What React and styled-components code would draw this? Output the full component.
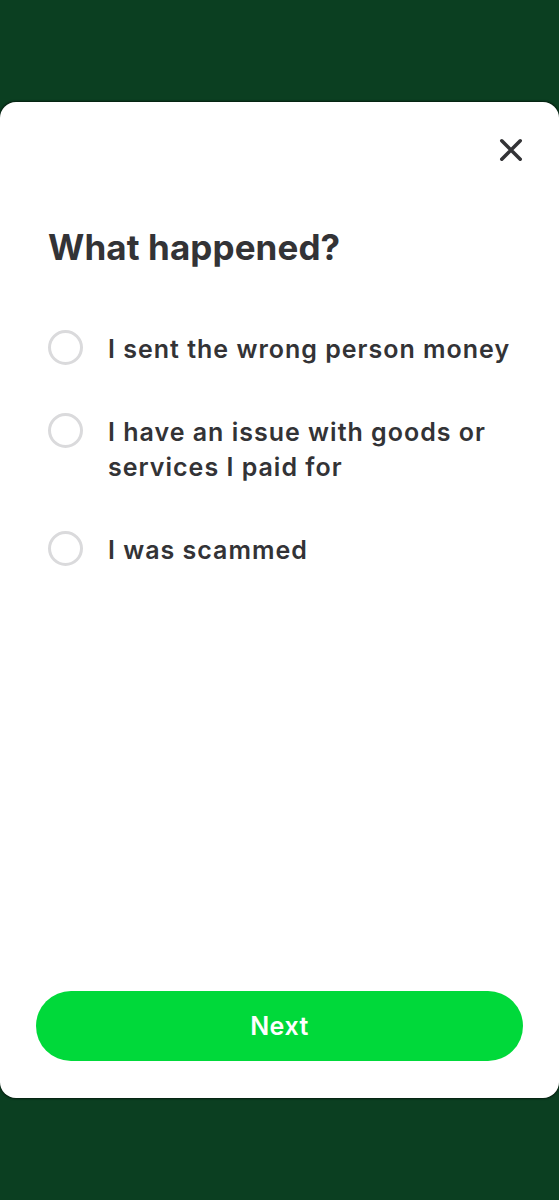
import React, { useState } from "react";
import styled, { createGlobalStyle } from "styled-components";

const GlobalStyle = createGlobalStyle`
  html, body { margin: 0; padding: 0; background: #0b3f21; }
  body { font-family: Inter, "Noto Sans", "Liberation Sans", sans-serif; }
  * { box-sizing: border-box; }
`;

const Page = styled.div`
  width: 559px;
  height: 1200px;
  background: #0b3f21;
  padding: 102px 0;
  display: flex;
  flex-direction: column;
`;

const Sheet = styled.div`
  flex: 1;
  background: #ffffff;
  border-radius: 16px;
  box-shadow: 0 0 2px 1px rgba(0, 0, 0, 0.55);
  padding: 36px 36px 37px 36px;
  display: flex;
  flex-direction: column;
`;

const TopBar = styled.div`
  display: flex;
  justify-content: flex-end;
  height: 24px;
`;

const CloseButton = styled.button`
  width: 24px;
  height: 24px;
  padding: 0;
  border: none;
  background: transparent;
  cursor: pointer;
  display: flex;
  align-items: center;
  justify-content: center;
`;

const Content = styled.div`
  flex: 1;
  padding: 0 0 0 12px;
  display: flex;
  flex-direction: column;
`;

const Title = styled.h1`
  margin: 65px 0 0 0;
  font-size: 35px;
  line-height: 40px;
  font-weight: 700;
  color: #333336;
  letter-spacing: 0.1px;
`;

const Options = styled.div`
  margin-top: 65px;
  display: flex;
  flex-direction: column;
  gap: 48px;
`;

const Option = styled.label`
  display: flex;
  align-items: flex-start;
  gap: 25px;
  cursor: pointer;
`;

const Radio = styled.span`
  flex: none;
  width: 35px;
  height: 35px;
  margin-top: -2px;
  border-radius: 50%;
  border: 3px solid ${(p) => (p.$checked ? "#00d93a" : "#dadadc")};
  background: ${(p) => (p.$checked ? "radial-gradient(circle, #00d93a 45%, #fff 47%)" : "#fff")};
`;

const OptionText = styled.span`
  font-size: 25px;
  line-height: 35px;
  font-weight: 600;
  color: #333336;
  letter-spacing: 1px;
  max-width: 410px;
`;

const NextButton = styled.button`
  width: 100%;
  height: 70px;
  border: none;
  border-radius: 35px;
  background: #00d93a;
  color: #ffffff;
  font-family: Inter, "Noto Sans", "Liberation Sans", sans-serif;
  font-size: 25px;
  font-weight: 600;
  letter-spacing: 0.5px;
  cursor: pointer;
`;

const options = [
  "I sent the wrong person money",
  "I have an issue with goods or services I paid for",
  "I was scammed",
];

export default function App() {
  const [selected, setSelected] = useState(null);
  return (
    <>
      <GlobalStyle />
      <Page>
        <Sheet>
          <TopBar>
            <CloseButton aria-label="Close">
              <svg width="26" height="26" viewBox="0 0 26 26">
                <path
                  d="M3 3 L23 23 M23 3 L3 23"
                  stroke="#333336"
                  strokeWidth="3.8"
                  strokeLinecap="round"
                  fill="none"
                />
              </svg>
            </CloseButton>
          </TopBar>
          <Content>
            <Title>What happened?</Title>
            <Options>
              {options.map((o, i) => (
                <Option key={o} onClick={() => setSelected(i)}>
                  <Radio $checked={selected === i} />
                  <OptionText>{o}</OptionText>
                </Option>
              ))}
            </Options>
          </Content>
          <NextButton>Next</NextButton>
        </Sheet>
      </Page>
    </>
  );
}
